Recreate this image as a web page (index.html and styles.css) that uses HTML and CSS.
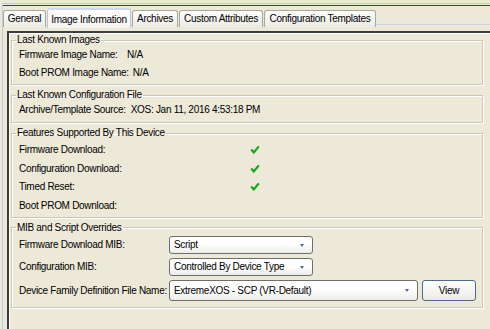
FILE: index.html
```html
<!DOCTYPE html>
<html lang="en">
<head>
  <meta charset="UTF-8" />
  <title>Image Information</title>
  <link rel="stylesheet" href="styles.css">
</head>
<body>
  <div class="window">
    <div class="tabs">
      <div class="tab t-general">General</div>
      <div class="tab active t-image">Image Information</div>
      <div class="tab t-archives">Archives</div>
      <div class="tab t-custom">Custom Attributes</div>
      <div class="tab t-templates">Configuration Templates</div>
    </div>

    <div class="panel">
      <fieldset class="group g-images">
        <legend>Last Known Images</legend>
        <div class="row"><span class="label">Firmware Image Name:</span><span>N/A</span></div>
        <div class="row"><span class="label">Boot PROM Image Name:</span><span>N/A</span></div>
      </fieldset>

      <fieldset class="group g-config">
        <legend>Last Known Configuration File</legend>
        <div class="row"><span class="label">Archive/Template Source:</span><span>XOS: Jan 11, 2016 4:53:18 PM</span></div>
      </fieldset>

      <fieldset class="group g-features">
        <legend>Features Supported By This Device</legend>
        <div class="row">
          <span class="label">Firmware Download:</span>
          <svg class="check" width="10" height="9" viewBox="0 0 10 9"><path d="M1.2 4.6 L3.8 7.4 L8.8 1.4" /></svg>
        </div>
        <div class="row">
          <span class="label">Configuration Download:</span>
          <svg class="check" width="10" height="9" viewBox="0 0 10 9"><path d="M1.2 4.6 L3.8 7.4 L8.8 1.4" /></svg>
        </div>
        <div class="row">
          <span class="label">Timed Reset:</span>
          <svg class="check" width="10" height="9" viewBox="0 0 10 9"><path d="M1.2 4.6 L3.8 7.4 L8.8 1.4" /></svg>
        </div>
        <div class="row"><span class="label">Boot PROM Download:</span></div>
      </fieldset>

      <fieldset class="group g-mib">
        <legend>MIB and Script Overrides</legend>
        <div class="row">
          <span class="label">Firmware Download MIB:</span>
          <div class="select">Script<span class="arrow"></span></div>
        </div>
        <div class="row">
          <span class="label">Configuration MIB:</span>
          <div class="select">Controlled By Device Type<span class="arrow"></span></div>
        </div>
        <div class="row last">
          <span class="label">Device Family Definition File Name:</span>
          <div class="select wide">ExtremeXOS - SCP (VR-Default)<span class="arrow"></span></div>
          <button class="btn">View</button>
        </div>
      </fieldset>
    </div>
  </div>
</body>
</html>
```

FILE: styles.css
```css
body {
  margin: 0;
  background: #ece9d8;
  font-family: "Liberation Sans", Arial, sans-serif;
  font-size: 10px;
  letter-spacing: -0.3px;
  color: #000;
  height: 329px;
  overflow: hidden;
}
.window {
  margin: 3px 0 0 2px;
  border-top: 1px solid #b9cde8;
  border-left: 1px solid #b9cde8;
  height: 326px;
}
.tabs {
  display: flex;
  align-items: flex-start;
  margin-top: 1px;
  height: 20px;
  border-top: 1px solid #404040;
  border-bottom: 1px solid #c6d6ee;
  padding: 4px 0 0 0;
  box-sizing: border-box;
}
.tab {
  flex-shrink: 0;
  box-sizing: border-box;
  height: 17px;
  line-height: 15px;
  text-align: center;
  white-space: nowrap;
  background: linear-gradient(#fdfdfb, #ecebe4);
  border: 1px solid #a6a89c;
  border-bottom: none;
  border-radius: 3px 3px 0 0;
  margin-right: 1px;
}
.tab.active {
  height: 20px;
  line-height: 19px;
  margin-top: -2px;
  background: linear-gradient(#ffffff, #f4f3ee);
  border-color: #b7c7df;
  border-top: 2px solid #c8d9f0;
}
.t-general { width: 43px; }
.t-image { width: 84px; }
.t-archives { width: 46px; }
.t-custom { width: 84px; }
.t-templates { width: 112px; }

.panel {
  margin: 6px 0 0 4px;
  border-top: 2px solid #3c3c3c;
  border-left: 2px solid #3c3c3c;
  box-shadow: inset 1px 1px 0 #ffffff;
  padding: 2px 7px 0 2px;
  height: 300px;
}
.group {
  margin: 0 0 5px 0;
  padding: 0 6px 3px 7px;
  border: 1px solid #c9c7ba;
  box-shadow: 1px 1px 0 #ffffff, inset 1px 1px 0 #ffffff;
  min-width: 0;
}
.group legend {
  padding: 0 1px;
  margin-left: -3px;
  line-height: 10px;
}
.row {
  display: flex;
  align-items: center;
  height: 18px;
  white-space: nowrap;
}
.label {
  flex-shrink: 0;
  margin-right: 4px;
}
.g-images .label {
  min-width: 104px;
}
.g-config {
  padding-bottom: 4px;
}
.g-config .label {
  min-width: 105px;
  margin-right: 5px;
}
.g-features {
  padding-top: 2px;
  padding-bottom: 2px;
}
.g-features .row {
  height: 18.7px;
}
.g-features .label {
  width: 227px;
}
.check {
  fill: none;
  stroke: #17a317;
  stroke-width: 2.2;
}
.g-mib {
  padding-top: 3px;
  padding-bottom: 6px;
}
.g-mib .row {
  height: 18px;
  margin-bottom: 4px;
}
.g-mib .row.last {
  height: 21px;
  margin-bottom: 0;
}
.g-mib .label {
  width: 146px;
}
.select {
  position: relative;
  box-sizing: border-box;
  width: 144px;
  height: 18px;
  line-height: 16px;
  padding-left: 4px;
  border: 1px solid #6e6e6e;
  border-radius: 3px;
  background: linear-gradient(#ffffff 45%, #ecece8);
}
.row.last .select {
  height: 21px;
  line-height: 19px;
}
.select.wide {
  width: 249px;
}
.arrow {
  position: absolute;
  right: 8px;
  top: 7px;
  border-left: 2.5px solid transparent;
  border-right: 2.5px solid transparent;
  border-top: 3px solid #4d6a98;
}
.row.last .arrow {
  top: 8px;
}
.btn {
  margin-left: 4px;
  width: 54px;
  height: 21px;
  padding: 0;
  font-family: inherit;
  font-size: 10px;
  letter-spacing: -0.3px;
  color: #000;
  background: linear-gradient(#ffffff, #ebeae4);
  border: 1px solid #4f6a8e;
  border-radius: 3px;
}
```
